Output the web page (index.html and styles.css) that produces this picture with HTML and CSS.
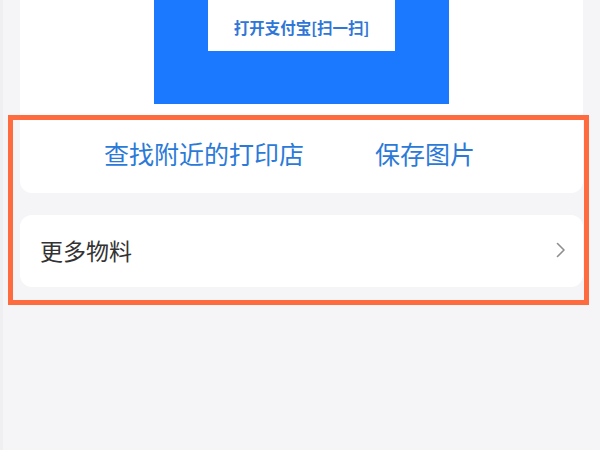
FILE: index.html
```html
<!DOCTYPE html>
<html lang="zh-CN">
<head>
<meta charset="utf-8">
<title>打印物料</title>
<link rel="stylesheet" href="styles.css">
</head>
<body>
<div class="page">
  <section class="card card-top">
    <div class="poster">
      <div class="poster-label">打开支付宝[扫一扫]</div>
    </div>
    <div class="actions">
      <a class="action">查找附近的打印店</a>
      <a class="action">保存图片</a>
    </div>
  </section>
  <section class="card card-row">
    <span class="row-title">更多物料</span>
    <svg class="chevron" width="10" height="16" viewBox="0 0 10 16"><polyline points="1.5,1.5 8,8 1.5,14.5" fill="none" stroke="#8e8e8e" stroke-width="1.6" stroke-linecap="round" stroke-linejoin="round"/></svg>
  </section>
  <div class="highlight"></div>
</div>
</body>
</html>
```

FILE: styles.css
```css
html, body {
  margin: 0;
  padding: 0;
}
body {
  width: 600px;
  height: 450px;
  overflow: hidden;
  background: #f5f5f7;
  font-family: "Noto Sans CJK SC", "Noto Sans", sans-serif;
}
.page {
  position: relative;
  padding: 0 17px 0 17px;
  height: 450px;
  box-sizing: border-box;
  border-left: 3px solid #efeff1;
}
.card {
  background: #ffffff;
  border-radius: 12px;
}
.card-top {
  border-radius: 0 0 12px 12px;
  display: flex;
  flex-direction: column;
}
.poster {
  width: 295px;
  height: 104px;
  margin: 0 auto;
  background: #1a79ff;
  display: flex;
  justify-content: center;
}
.poster-label {
  width: 187px;
  height: 51px;
  background: #ffffff;
  color: #2f76d6;
  font-size: 15.5px;
  font-weight: 700;
  line-height: 51px;
  text-align: center;
  padding-top: 2px;
  box-sizing: border-box;
}
.actions {
  height: 89px;
  box-sizing: border-box;
  padding: 9px 0 0 84px;
  display: flex;
  align-items: center;
  gap: 71px;
}
.action {
  font-size: 25px;
  line-height: 34px;
  color: #2b7ad8;
  text-decoration: none;
}
.card-row {
  margin-top: 22px;
  height: 72px;
  display: flex;
  align-items: center;
  justify-content: space-between;
  padding: 0 17px 2px 20px;
  box-sizing: border-box;
}
.row-title {
  font-size: 23px;
  color: #333333;
  line-height: 30px;
}
.chevron {
  display: block;
}
.highlight {
  position: absolute;
  left: 5px;
  top: 115px;
  width: 581px;
  height: 190px;
  box-sizing: border-box;
  border: 5px solid #fd6b3f;
}
```
